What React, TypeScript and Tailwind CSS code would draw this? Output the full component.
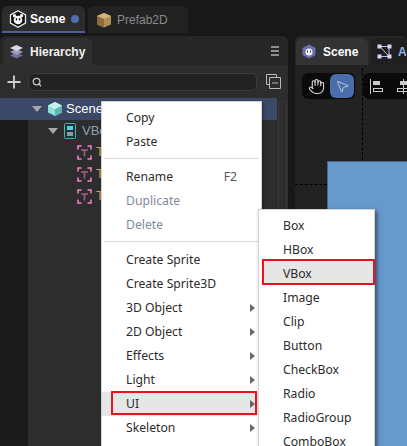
import { Hand, MousePointer2, Plus, Search } from 'lucide-react';

const mainMenu = [
  { label: 'Copy' },
  { label: 'Paste', sep: true },
  { label: 'Rename', hint: 'F2' },
  { label: 'Duplicate', off: true },
  { label: 'Delete', off: true, sep: true },
  { label: 'Create Sprite' },
  { label: 'Create Sprite3D' },
  { label: '3D Object', sub: true },
  { label: '2D Object', sub: true },
  { label: 'Effects', sub: true },
  { label: 'Light', sub: true },
  { label: 'UI', sub: true, on: true },
  { label: 'Skeleton', sub: true },
];

const uiMenu = ['Box', 'HBox', 'VBox', 'Image', 'Clip', 'Button', 'CheckBox', 'Radio', 'RadioGroup', 'ComboBox'];

function SceneLogo() {
  return (
    <svg width="18" height="18" viewBox="0 0 18 18" className="shrink-0">
      <path d="M9 .8 16.500 5v8L9 17.200 1.500 13V5Z" fill="#111" stroke="#eee" strokeWidth="1.300" />
      <circle cx="9" cy="10" r="4.300" fill="#f6f6f6" />
      <circle cx="5.500" cy="5.800" r="1.700" fill="#f6f6f6" />
      <circle cx="12.500" cy="5.800" r="1.700" fill="#f6f6f6" />
      <rect x="6.800" y="8.200" width="1.300" height="2.200" fill="#111" />
      <rect x="9.900" y="8.200" width="1.300" height="2.200" fill="#111" />
    </svg>
  );
}

function TextNodeIcon() {
  return (
    <svg width="15" height="15" viewBox="0 0 15 15" fill="none" className="shrink-0">
      <path d="M1 4.500V1h3.500M10.500 1H14v3.500M14 10.500V14h-3.500M4.500 14H1v-3.500" stroke="#f583cb" strokeWidth="1.500" />
      <path d="M4 5h7M7.500 5v6.500" stroke="#a65c92" strokeWidth="1.600" />
    </svg>
  );
}

function Arrow() {
  return <div className="h-0 w-0 shrink-0 border-x-[5px] border-t-[6px] border-x-transparent border-t-[#a9a9a9]" />;
}

function Menu() {
  return (
    <div className="absolute left-[101px] top-[101px] h-[360px] w-[161px] border border-[#d4d4d4] bg-white pt-[4px] shadow-[1px_1px_3px_rgba(0,0,0,0.4)]">
      {mainMenu.map((m) => (
        <div key={m.label}>
          <div className={`relative flex h-6 items-center justify-between pl-6 pr-[20px] ${m.on ? 'bg-[#e6e6e6]' : ''} ${m.off ? 'text-[#7f8a98]' : 'text-[#2b2b2b]'}`}>
            <span>{m.label}</span>
            {m.hint && <span className="pr-1 text-[#555]">{m.hint}</span>}
            {m.sub && <div className="absolute right-[6px] h-0 w-0 border-y-[4px] border-l-[5px] border-y-transparent border-l-[#666]" />}
            {m.on && <div className="absolute left-[9px] right-[4px] -top-[1px] h-[24px] border-[2px] border-[#e8141f]" />}
          </div>
          {m.sep && <div className="mx-[2px] mb-[6px] mt-[4px] h-px bg-[#d8d8d8]" />}
        </div>
      ))}
    </div>
  );
}

function SubMenu() {
  return (
    <div className="absolute left-[258px] top-[209px] h-[260px] w-[117px] border border-[#d4d4d4] bg-white pt-[4px] shadow-[2px_2px_4px_rgba(0,0,0,0.5)]">
      {uiMenu.map((label) => (
        <div key={label} className="relative flex h-6 items-center pl-6 text-[#2b2b2b]">
          {label === 'VBox' && <div className="absolute -right-[1px] -top-[3px] left-[3px] h-[26px] border-[2px] border-[#e8141f] bg-[#e6e6e6]" />}
          <span className="relative">{label}</span>
        </div>
      ))}
    </div>
  );
}

export default function App() {
  return (
    <div className="relative flex h-[446px] w-[407px] flex-col overflow-hidden bg-[#181818] font-['Liberation_Sans',sans-serif] text-[12px]">
      {/* top tabs */}
      <div className="flex h-[36px] shrink-0 gap-[3px] pb-[3px] pl-[2px] pt-[6px]">
        <div className="flex h-[27px] w-[83px] items-center rounded-t-md border-b-[2px] border-[#4a6595] bg-[#2c2c2c] pl-[7px]">
          <SceneLogo />
          <span className="ml-[3px] font-bold text-white">Scene</span>
          <span className="ml-[6px] h-2 w-2 rounded-full bg-[#4e6fae]" />
        </div>
        <div className="flex h-[27px] w-[100px] items-center rounded-t-md bg-[#222] pl-[8px] text-[#8a8a8a]">
          <svg width="16" height="16" viewBox="0 0 16 16">
            <path d="M8 1 15 4v8.500L8 15.500 1 12.500V4Z" fill="#b08d57" />
            <path d="M1 4l7 3 7-3-7-3Z" fill="#d3b27c" />
            <path d="M8 7v8.500L1 12.500V4Z" fill="#8d6d3f" />
          </svg>
          <span className="ml-[5px]">Prefab2D</span>
        </div>
      </div>

      <div className="flex min-h-0 flex-1 gap-[7px]">
        {/* hierarchy panel */}
        <div className="flex w-[288px] shrink-0 flex-col overflow-hidden rounded-t-md bg-[#2d2d2d]">
          <div className="flex h-[29px] shrink-0 items-end justify-between bg-[#262626] pl-[3px]">
            <div className="flex h-[27px] w-[89px] items-center rounded-t-md bg-[#2f2f2f] pl-[6px]">
              <svg width="15" height="15" viewBox="0 0 15 15">
                <path d="M7.500 8.500 1 11.500l6.500 3 6.500-3Z" fill="#6f6f99" />
                <path d="M7.500 5 1 8l6.500 3L14 8Z" fill="#9c9cc4" />
                <path d="M7.500 1 1 4l6.500 3L14 4Z" fill="#d7d7ee" />
              </svg>
              <span className="ml-[6px] font-bold text-[#f0f0f0]">Hierarchy</span>
            </div>
            <div className="mb-[9px] mr-[9px] flex w-2 flex-col gap-[2px]">
              <i className="h-[2px] bg-[#8f8f8f]" />
              <i className="h-[2px] bg-[#8f8f8f]" />
              <i className="h-[2px] bg-[#8f8f8f]" />
            </div>
          </div>
          <div className="flex h-[33px] shrink-0 items-center bg-[#2d2d2d] pl-[4px]">
            <Plus size={20} color="#cfcfcf" strokeWidth={2.200} />
            <div className="ml-[4px] flex h-[18px] w-[229px] items-center rounded-md border border-[#3b3b3b] bg-[#222] pl-[3px]">
              <Search size={10} color="#c8c8c8" strokeWidth={3} />
            </div>
            <svg width="15" height="15" viewBox="0 0 15 15" fill="none" stroke="#b9b9b9" className="ml-[9px]">
              <path d="M10.500 3V.5H.5v10H3" />
              <path d="M3.500 3.500h11v11h-11ZM6 9h6" />
            </svg>
          </div>
          <div className="flex min-h-0 flex-1">
            <div className="flex min-w-0 flex-1 flex-col text-[13px] text-[#d8d8d8]">
              <div className="flex h-[22px] shrink-0 items-center bg-[#3b4867] pl-[32px] text-white">
                <Arrow />
                <svg width="16" height="16" viewBox="0 0 16 16" className="ml-[5px] shrink-0">
                  <path d="M8 1 15 4.500v7L8 15 1 11.500v-7Z" fill="#8fe0d6" />
                  <path d="M8 8v7l7-3.500v-7Z" fill="#5fb8ae" />
                  <path d="M8 8 1 4.500 8 1l7 3.500Z" fill="#c4f3ed" />
                </svg>
                <span className="ml-[3px]">Scene</span>
              </div>
              <div className="flex min-h-0 flex-1">
                <div className="w-[28px] shrink-0 bg-[#1b1b1b]" />
                <div className="min-w-0 flex-1">
                  <div className="flex h-[21px] items-center gap-1.5 pl-[20px]">
                    <Arrow />
                    <svg width="12" height="16" viewBox="0 0 12 16" fill="none" className="shrink-0">
                      <rect x=".5" y=".5" width="11" height="15" rx="1" stroke="#39b6c6" />
                      <rect x="3" y="3" width="6" height="4" fill="#58cfe0" />
                      <rect x="3" y="9" width="6" height="4" fill="#8a9aa0" />
                    </svg>
                    <span className="text-[#8fa0b5]">VBox</span>
                  </div>
                  {[0, 1, 2].map((i) => (
                    <div key={i} className="flex h-[22px] items-center gap-[4px] pl-[49px]">
                      <TextNodeIcon />
                      <span className="text-[#d5a35e]">T</span>
                    </div>
                  ))}
                </div>
              </div>
            </div>
            {/* tree scrollbar */}
            <div className="ml-[1px] mr-[1px] mt-[3px] w-[9px] rounded-t-md border border-b-0 border-[#3a3a3a]" />
          </div>
        </div>

        {/* scene panel */}
        <div className="flex min-w-0 flex-1 flex-col overflow-hidden rounded-t-md bg-[#262626]">
          <div className="flex h-[29px] shrink-0 items-end gap-[3px] pl-[1px]">
            <div className="flex h-[27px] w-[72px] shrink-0 items-center rounded-t-md bg-[#333] pl-[6px]">
              <svg width="14" height="15" viewBox="0 0 14 15" className="shrink-0">
                <path d="M7 .5 13.500 4v7L7 14.500 .5 11V4Z" fill="#6a6fb0" />
                <circle cx="7" cy="8" r="3.500" fill="#f2f2f2" />
                <rect x="5" y="6.500" width="1" height="2" fill="#333" />
                <rect x="8" y="6.500" width="1" height="2" fill="#333" />
              </svg>
              <span className="ml-[7px] font-bold text-white">Scene</span>
            </div>
            <div className="flex h-[27px] min-w-0 flex-1 items-center overflow-hidden rounded-tl-md bg-[#1f1f1f] pl-[6px]">
              <svg width="15" height="15" viewBox="0 0 15 15" fill="none" className="shrink-0">
                <path d="M3 2.500h9M3 2.500l9 10M3 12.500h9M12 2.500v10" stroke="#b9bfdc" />
                <rect x=".5" y=".5" width="4" height="4" fill="#d6daf0" />
                <rect x="10.500" y=".5" width="4" height="4" fill="#d6daf0" />
                <rect x=".5" y="10.500" width="4" height="4" fill="#d6daf0" />
                <rect x="10.500" y="10.500" width="4" height="4" fill="#d6daf0" />
              </svg>
              <span className="ml-[6px] font-bold text-[#8fb2e6]">A</span>
            </div>
          </div>
          <div className="relative min-h-0 flex-1 bg-[#222]">
            <div className="absolute left-[67px] top-[3px] h-[92px] border-l border-dashed border-black" />
            <div className="absolute left-0 top-[119px] w-[32px] border-t border-dashed border-black" />
            <div className="absolute left-[32px] top-[96px] h-[300px] w-[200px] border border-[#46648a] bg-[#6699cc]" />
            <div className="relative flex gap-[8px] pl-[7px] pt-[8px]">
              <div className="flex h-[26px] w-[53px] shrink-0 items-center justify-between rounded-md bg-[#0a0a0a] px-[1px]">
                <Hand size={17} color="#ddd" strokeWidth={1.500} className="ml-[5px]" />
                <div className="flex h-[24px] w-[24px] items-center justify-center rounded-md bg-[#4a6dab]">
                  <MousePointer2 size={15} color="#c4cbd8" strokeWidth={1.500} />
                </div>
              </div>
              <div className="flex h-[26px] flex-1 items-center gap-[14px] rounded-l-md bg-[#0a0a0a] pl-[7px]">
                <svg width="13" height="15" viewBox="0 0 13 15" fill="none" stroke="#ccc" className="shrink-0">
                  <path d="M.5 0v15" />
                  <rect x="3.500" y="2.500" width="6" height="3" fill="#ccc" />
                  <rect x="3.500" y="9.500" width="9" height="3" />
                </svg>
                <svg width="13" height="15" viewBox="0 0 13 15" fill="none" stroke="#ccc" className="shrink-0">
                  <path d="M6.500 0v15" />
                  <rect x="3.500" y="2.500" width="6" height="3" fill="#ccc" />
                  <rect x=".5" y="9.500" width="12" height="3" />
                </svg>
              </div>
            </div>
          </div>
        </div>
      </div>

      <div className="font-['Noto_Sans',sans-serif] text-[12.2px]">
        <Menu />
        <SubMenu />
      </div>
    </div>
  );
}
